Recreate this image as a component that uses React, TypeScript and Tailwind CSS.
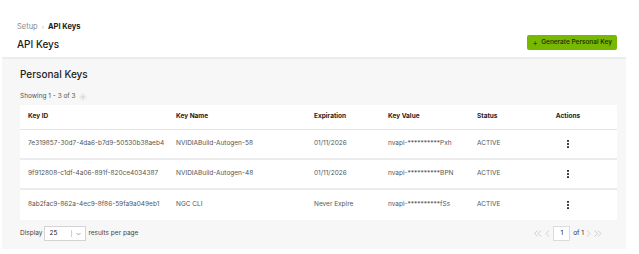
import React from "react";

type KeyRow = {
  id: string;
  name: string;
  expiration: string;
  value: string;
  status: string;
};

const rows: KeyRow[] = [
  {
    id: "7e319857-30d7-4da6-b7d9-50530b38aeb4",
    name: "NVIDIABuild-Autogen-58",
    expiration: "01/11/2026",
    value: "nvapi-**********Pxh",
    status: "ACTIVE",
  },
  {
    id: "9f912808-c1df-4a06-891f-820ce4034387",
    name: "NVIDIABuild-Autogen-48",
    expiration: "01/11/2026",
    value: "nvapi-**********BPN",
    status: "ACTIVE",
  },
  {
    id: "8ab2fac9-862a-4ec9-8f86-59fa9a049eb1",
    name: "NGC CLI",
    expiration: "Never Expire",
    value: "nvapi-**********fSs",
    status: "ACTIVE",
  },
];

const Gear = () => (
  <svg width="8" height="8" viewBox="0 0 16 16" fill="none" stroke="#c4c4c4" strokeWidth="1.6">
    <circle cx="8" cy="8" r="2.2" />
    <path d="M8 1.5v2M8 12.5v2M1.5 8h2M12.5 8h2M3.4 3.4l1.4 1.4M11.2 11.2l1.4 1.4M3.4 12.6l1.4-1.4M11.2 4.8l1.4-1.4" />
  </svg>
);

const Dots = () => (
  <svg width="2" height="8" viewBox="0 0 2 8" fill="#333">
    <rect x="0" y="0" width="2" height="1.8" />
    <rect x="0" y="3.1" width="2" height="1.8" />
    <rect x="0" y="6.2" width="2" height="1.8" />
  </svg>
);

const Chevron = ({ dir, double }: { dir: "left" | "right"; double?: boolean }) => {
  const d =
    dir === "left"
      ? double
        ? "M4.5 1.5L1.5 4.5l3 3M8 1.5L5 4.5l3 3"
        : "M5 1.5L2 4.5l3 3"
      : double
        ? "M1.5 1.5l3 3-3 3M5 1.5l3 3-3 3"
        : "M2 1.5l3 3-3 3";
  return (
    <svg width={double ? 10 : 7} height="9" viewBox={double ? "0 0 10 9" : "0 0 7 9"} fill="none" stroke="#c8c8c8" strokeWidth="0.9">
      <path d={d} />
    </svg>
  );
};

export default function App() {
  return (
    <div
      className="h-[254px] w-[639px] overflow-hidden bg-white text-[#1a1a1a]"
      style={{ fontFamily: "Inter, Roboto, 'Liberation Sans', sans-serif" }}
    >
      <div className="flex items-end justify-between pl-[17px] pr-[22px] pt-[21px]">
        <div>
          <div className="flex items-center gap-[4px] text-[7.5px] leading-[12px]">
            <span className="text-[#8a8a8a]">Setup</span>
            <span className="text-[6px] text-[#b0b0b0]">›</span>
            <span className="font-bold">API Keys</span>
          </div>
          <div className="mt-[4px] text-[10px] font-medium leading-[14px]">API Keys</div>
        </div>
        <button className="mb-[1px] flex h-[15px] items-center gap-[3px] rounded-[2px] bg-[#76b900] px-[5px] text-[6.5px] font-medium text-[#1a2a00]">
          <span className="text-[9px] font-light leading-none">+</span>
          Generate Personal Key
        </button>
      </div>

      <div className="mx-[2px] mt-[6px] h-[192px] w-[624px] border-t-2 border-[#ececec] bg-[#f7f7f7] px-[18px] pt-[8px]">
        <div className="text-[10px] font-medium leading-[14px] text-[#222]">Personal Keys</div>
        <div className="mt-[11px] flex items-center gap-[3px] text-[6.5px] leading-[9px] text-[#555]">
          <span>Showing 1 - 3 of 3</span>
          <Gear />
        </div>

        <div className="mt-[4px] w-[597px] bg-white text-[6.5px]">
          <div className="flex h-[25px] items-center border-b border-[#e4e4e4] font-bold text-[#222]">
            <div className="w-[156px] pl-[8px]">Key ID</div>
            <div className="w-[138px]">Key Name</div>
            <div className="w-[74px]">Expiration</div>
            <div className="w-[89px]">Key Value</div>
            <div className="w-[70px]">Status</div>
            <div className="w-[42px] text-center">Actions</div>
          </div>
          {rows.map((row, i) => (
            <div
              key={row.id}
              className={`flex h-[30px] items-center text-[#555] ${
                i < rows.length - 1 ? "border-b-2 border-[#ececec]" : ""
              }`}
            >
              <div className="w-[156px] pl-[8px]">{row.id}</div>
              <div className="w-[138px]">{row.name}</div>
              <div className="w-[74px]">{row.expiration}</div>
              <div className="w-[89px]">{row.value}</div>
              <div className="w-[70px]">{row.status}</div>
              <div className="flex w-[42px] justify-center">
                <Dots />
              </div>
            </div>
          ))}
        </div>

        <div className="mt-[6px] flex items-center justify-between text-[6.5px] text-[#444]">
          <div className="flex items-center gap-[2px]">
            <span>Display</span>
            <div className="flex h-[15px] w-[42px] items-center border border-[#d4d4d4] bg-white pl-[4px] text-[#222]">
              <span className="flex-1">25</span>
              <span className="h-[7px] w-px bg-[#d0d0d0]" />
              <svg width="9" height="6" viewBox="0 0 9 6" className="mx-[2px]" fill="none" stroke="#9a9a9a" strokeWidth="0.9">
                <path d="M2.5 2l2 2 2-2" />
              </svg>
            </div>
            <span>results per page</span>
          </div>
          <div className="flex items-center gap-[1px] pr-[5px]">
            <Chevron dir="left" double />
            <Chevron dir="left" />
            <div className="ml-[1px] flex h-[15px] w-[17px] items-center justify-center border border-[#dcdcdc] bg-white text-[#222]">
              1
            </div>
            <span className="ml-[2px] text-[#333]">of 1</span>
            <Chevron dir="right" />
            <Chevron dir="right" double />
          </div>
        </div>
      </div>
    </div>
  );
}
